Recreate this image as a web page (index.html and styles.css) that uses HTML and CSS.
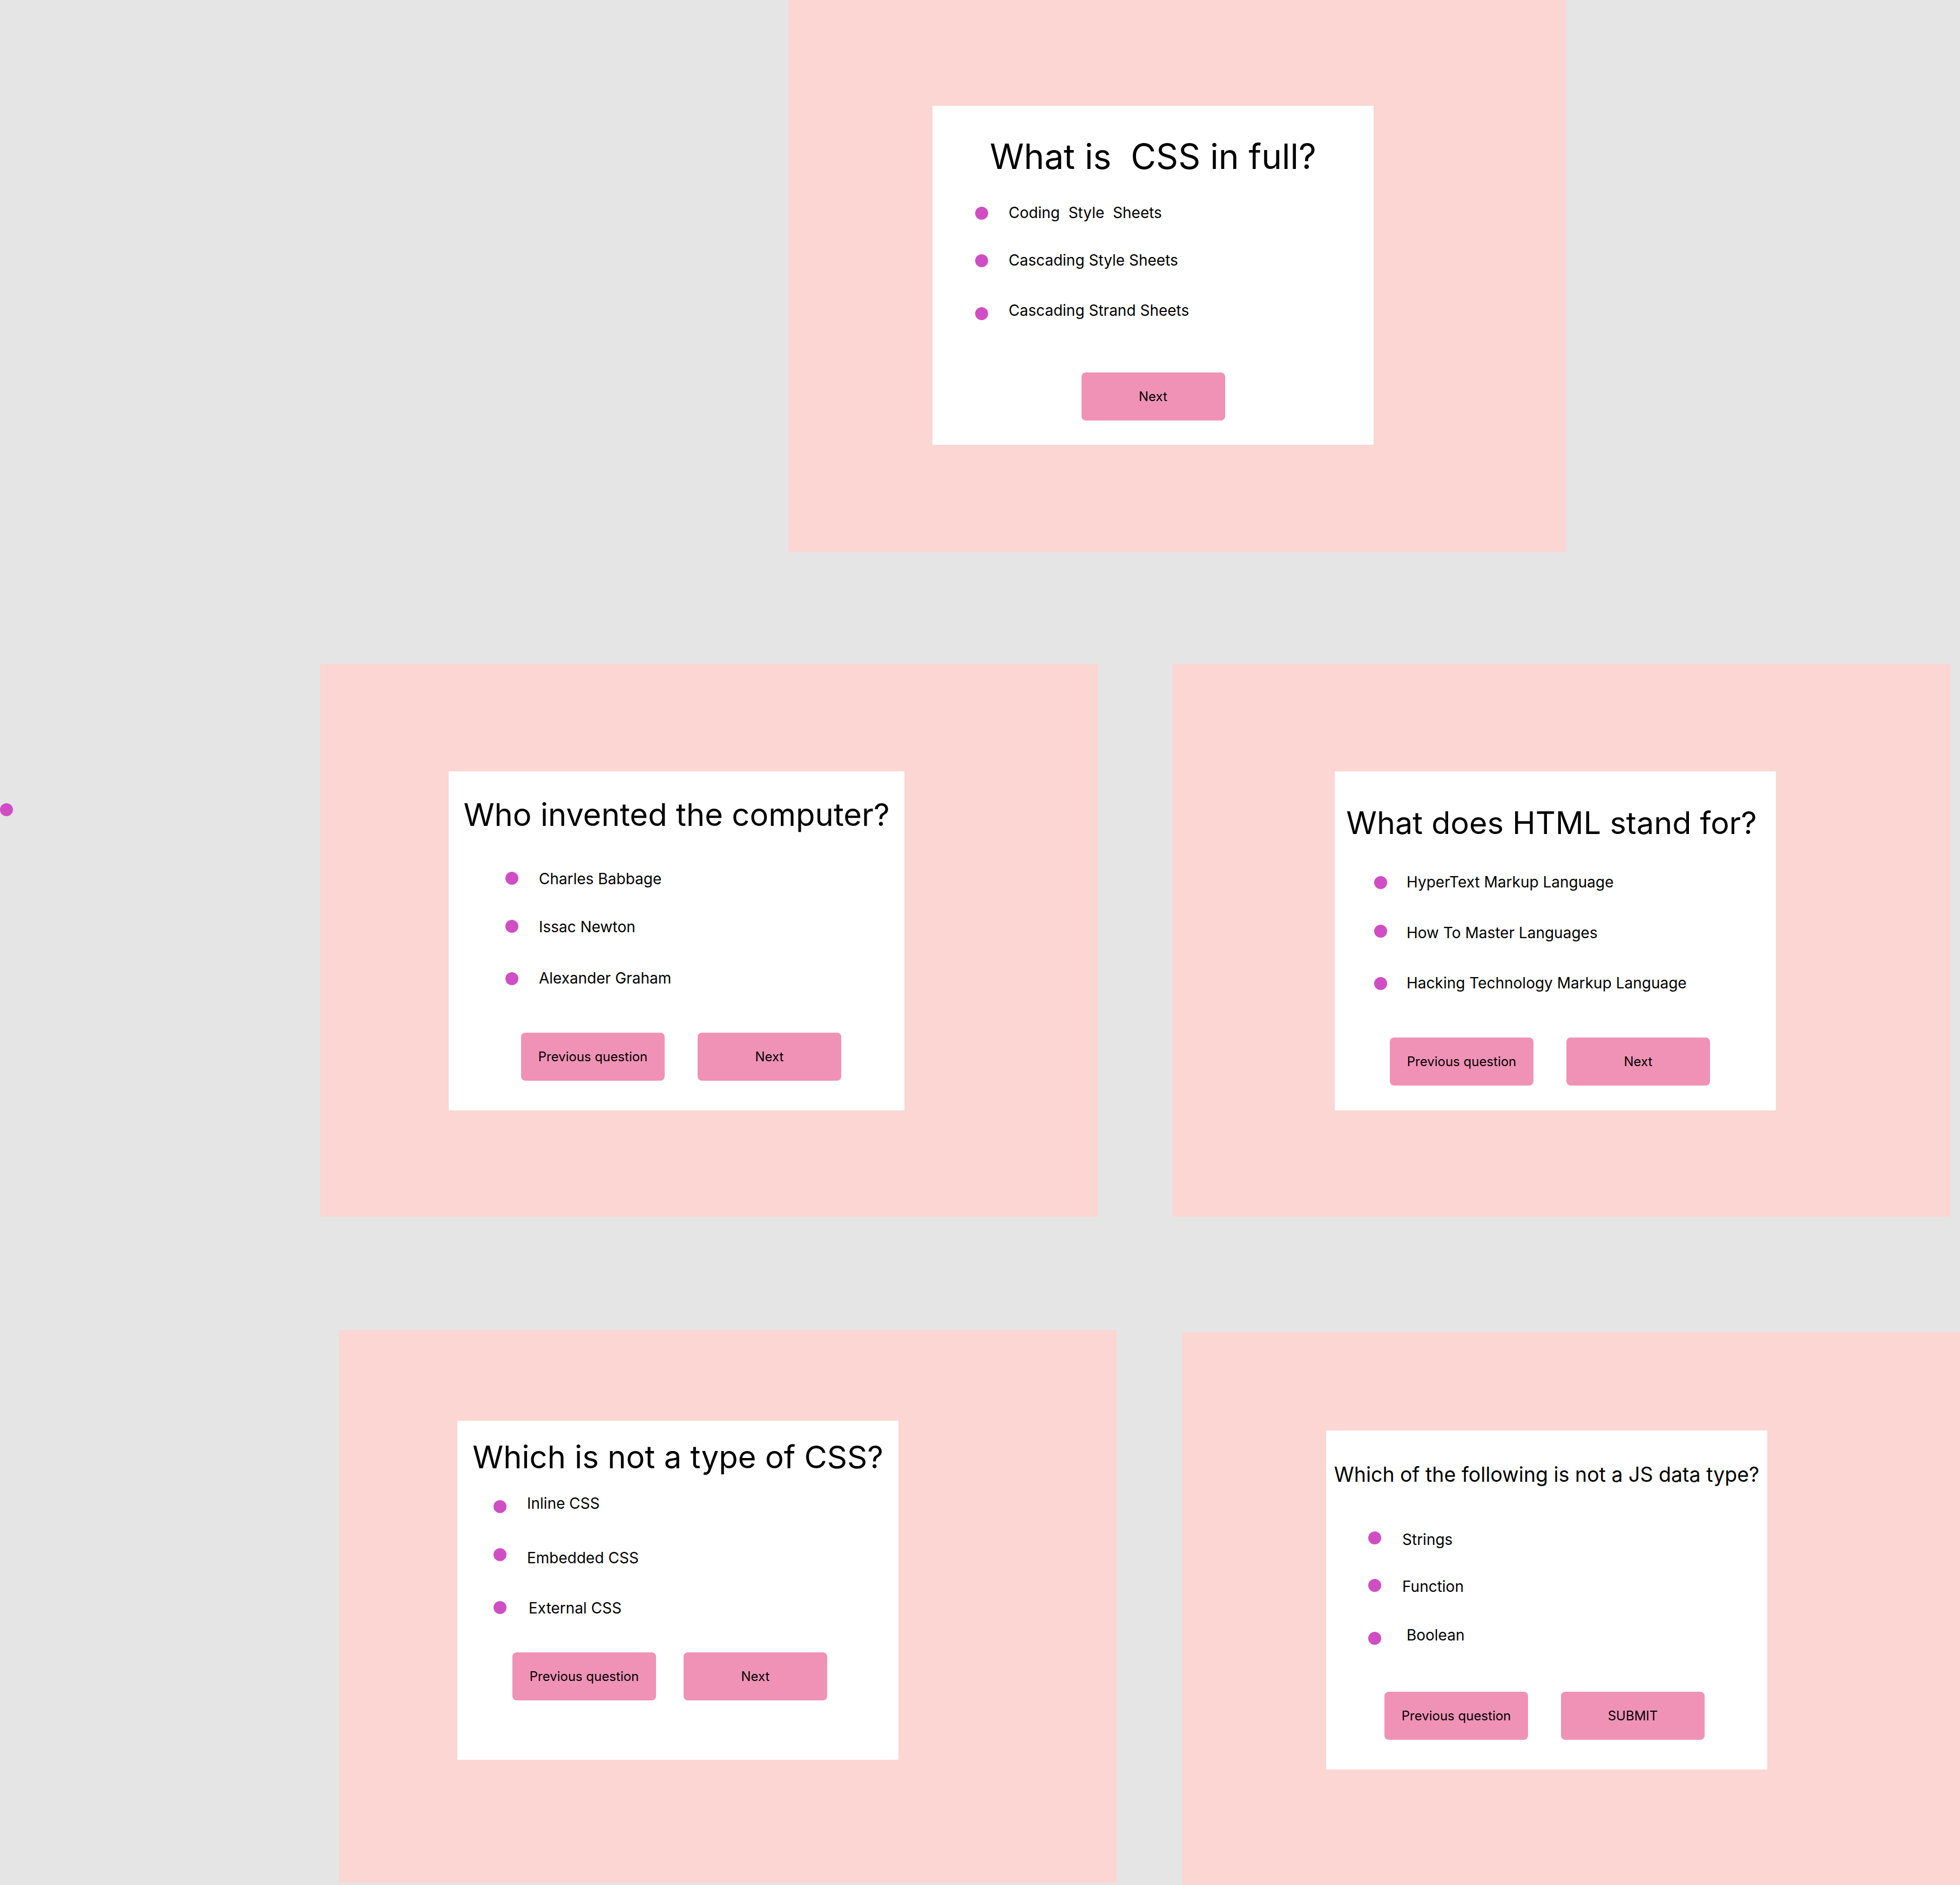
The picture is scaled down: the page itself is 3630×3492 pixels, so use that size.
FILE: index.html
```html
<!DOCTYPE html>
<html lang="en">
<head>
<meta charset="utf-8">
<title>Quiz screens</title>
<link rel="stylesheet" href="styles.css">
</head>
<body>
<main class="canvas">
  <span class="stray-dot"></span>

  <section class="frame frame-1">
    <div class="card q1">
      <h2 class="title">What is  CSS in full?</h2>
      <ul class="options">
        <li class="option"><span class="bullet"></span><span class="label">Coding  Style  Sheets</span></li>
        <li class="option"><span class="bullet"></span><span class="label">Cascading Style Sheets</span></li>
        <li class="option"><span class="bullet"></span><span class="label">Cascading Strand Sheets</span></li>
      </ul>
      <div class="actions">
        <button class="btn">Next</button>
      </div>
    </div>
  </section>

  <section class="frame frame-2">
    <div class="card q2">
      <h2 class="title">Who invented the computer?</h2>
      <ul class="options">
        <li class="option"><span class="bullet"></span><span class="label">Charles Babbage</span></li>
        <li class="option"><span class="bullet"></span><span class="label">Issac Newton</span></li>
        <li class="option"><span class="bullet"></span><span class="label">Alexander Graham</span></li>
      </ul>
      <div class="actions">
        <button class="btn">Previous question</button>
        <button class="btn">Next</button>
      </div>
    </div>
  </section>

  <section class="frame frame-3">
    <div class="card q3">
      <h2 class="title">What does HTML stand for?</h2>
      <ul class="options">
        <li class="option"><span class="bullet"></span><span class="label">HyperText Markup Language</span></li>
        <li class="option"><span class="bullet"></span><span class="label">How To Master Languages</span></li>
        <li class="option"><span class="bullet"></span><span class="label">Hacking Technology Markup Language</span></li>
      </ul>
      <div class="actions">
        <button class="btn">Previous question</button>
        <button class="btn">Next</button>
      </div>
    </div>
  </section>

  <section class="frame frame-4">
    <div class="card q4">
      <h2 class="title">Which is not a type of CSS?</h2>
      <ul class="options">
        <li class="option"><span class="bullet"></span><span class="label">Inline CSS</span></li>
        <li class="option"><span class="bullet"></span><span class="label">Embedded CSS</span></li>
        <li class="option"><span class="bullet"></span><span class="label label-nudge">External CSS</span></li>
      </ul>
      <div class="actions">
        <button class="btn">Previous question</button>
        <button class="btn">Next</button>
      </div>
    </div>
  </section>

  <section class="frame frame-5">
    <div class="card q5">
      <h2 class="title">Which of the following is not a JS data type?</h2>
      <ul class="options">
        <li class="option"><span class="bullet"></span><span class="label">Strings</span></li>
        <li class="option"><span class="bullet"></span><span class="label">Function</span></li>
        <li class="option"><span class="bullet"></span><span class="label"> Boolean</span></li>
      </ul>
      <div class="actions">
        <button class="btn">Previous question</button>
        <button class="btn">SUBMIT</button>
      </div>
    </div>
  </section>
</main>
</body>
</html>
```

FILE: styles.css
```css
* { box-sizing: border-box; }

html, body {
  margin: 0;
  padding: 0;
  background: #e5e5e5;
  overflow: hidden;
}

body {
  font-family: Inter, "Noto Sans", "Liberation Sans", sans-serif;
  color: #000;
}

.canvas {
  position: relative;
  width: 3630px;
  height: 3492px;
  overflow: hidden;
  background: #e5e5e5;
}

.stray-dot {
  position: absolute;
  left: 0;
  top: 1488px;
  width: 24px;
  height: 24px;
  border-radius: 50%;
  background: #d04ec3;
}

/* frames on the free canvas */
.frame {
  position: absolute;
  width: 1440px;
  height: 1024px;
  background: #fbd6d3;
}
.frame-1 { left: 1461px; top: -1px; padding: 197px 0 0 266px; }
.frame-2 { left: 593px;  top: 1230px; padding: 199px 0 0 238px; }
.frame-3 { left: 2172px; top: 1230px; padding: 199px 0 0 300px; }
.frame-4 { left: 628px;  top: 2464px; padding: 168px 0 0 219px; }
.frame-5 { left: 2190px; top: 2468px; padding: 182px 0 0 266px; }

/* card */
.card {
  width: 817px;
  height: 628px;
  background: #fff;
  display: flex;
  flex-direction: column;
  padding-top: var(--pt);
}

.title {
  margin: 0;
  font-weight: 400;
  font-size: var(--ts);
  line-height: var(--tlh);
  text-align: center;
  white-space: pre;
  padding-right: var(--title-pr, 0px);
}

.options {
  list-style: none;
  margin: var(--opts-mt) 0 0;
  padding: 0;
  display: flex;
  flex-direction: column;
}

.option {
  display: flex;
  align-items: flex-start;
  height: 33px;
}
.option:nth-child(2) { margin-top: var(--g1); }
.option:nth-child(3) { margin-top: var(--g2); }

.bullet {
  flex: none;
  width: 24px;
  height: 24px;
  border-radius: 50%;
  background: #d04ec3;
  margin-left: var(--bx);
}
.option:nth-child(1) .bullet { margin-top: var(--b1); }
.option:nth-child(2) .bullet { margin-top: var(--b2); }
.option:nth-child(3) .bullet { margin-top: var(--b3); }

.label {
  margin-left: var(--lx);
  font-size: 28px;
  line-height: 33px;
  white-space: pre;
}
.label-nudge { padding-left: 3px; }

.actions {
  display: flex;
  gap: var(--bgap, 61px);
  margin-top: var(--act-mt);
  padding-left: var(--act-pl, 0px);
}

.btn {
  width: 266px;
  height: 89px;
  border: 0;
  border-radius: 8px;
  background: #f092b5;
  color: #000;
  font-family: Inter, "Noto Sans", "Liberation Sans", sans-serif;
  font-size: 24px;
  font-weight: 400;
  padding: 0;
}

/* per-card measurements */
.q1 {
  --pt: 55px; --ts: 64px; --tlh: 77px;
  --opts-mt: 50px; --g1: 55px; --g2: 60px;
  --bx: 79px; --lx: 38px; --b1: 5px; --b2: 5px; --b3: 10px;
  --act-mt: 98px;
}
.q1 .actions { justify-content: center; }

.q2 {
  width: 844px;
  --pt: 45px; --ts: 58px; --tlh: 70px;
  --opts-mt: 68px; --g1: 56px; --g2: 62px;
  --bx: 105px; --lx: 38px; --b1: 3px; --b2: 3px; --b3: 5px;
  --act-mt: 84px; --act-pl: 134px; --bgap: 61px;
}

.q3 {
  --pt: 60px; --ts: 57.5px; --tlh: 70px; --title-pr: 14px;
  --opts-mt: 59px; --g1: 61px; --g2: 60px;
  --bx: 73px; --lx: 36px; --b1: 5px; --b2: 1px; --b3: 5px;
  --act-mt: 84px; --act-pl: 102px; --bgap: 61px;
}

.q4 {
  --pt: 32px; --ts: 58px; --tlh: 70px;
  --opts-mt: 35px; --g1: 68px; --g2: 60px;
  --bx: 67px; --lx: 38px; --b1: 10px; --b2: -2px; --b3: 3px;
  --act-mt: 65px; --act-pl: 102px; --bgap: 51px;
}

.q5 {
  --pt: 59px; --ts: 37.5px; --tlh: 45px;
  --opts-mt: 82px; --g1: 54px; --g2: 57px;
  --bx: 78px; --lx: 39px; --b1: 1px; --b2: 2px; --b3: 10px;
  --act-mt: 88px; --act-pl: 108px; --bgap: 61px;
}
```
